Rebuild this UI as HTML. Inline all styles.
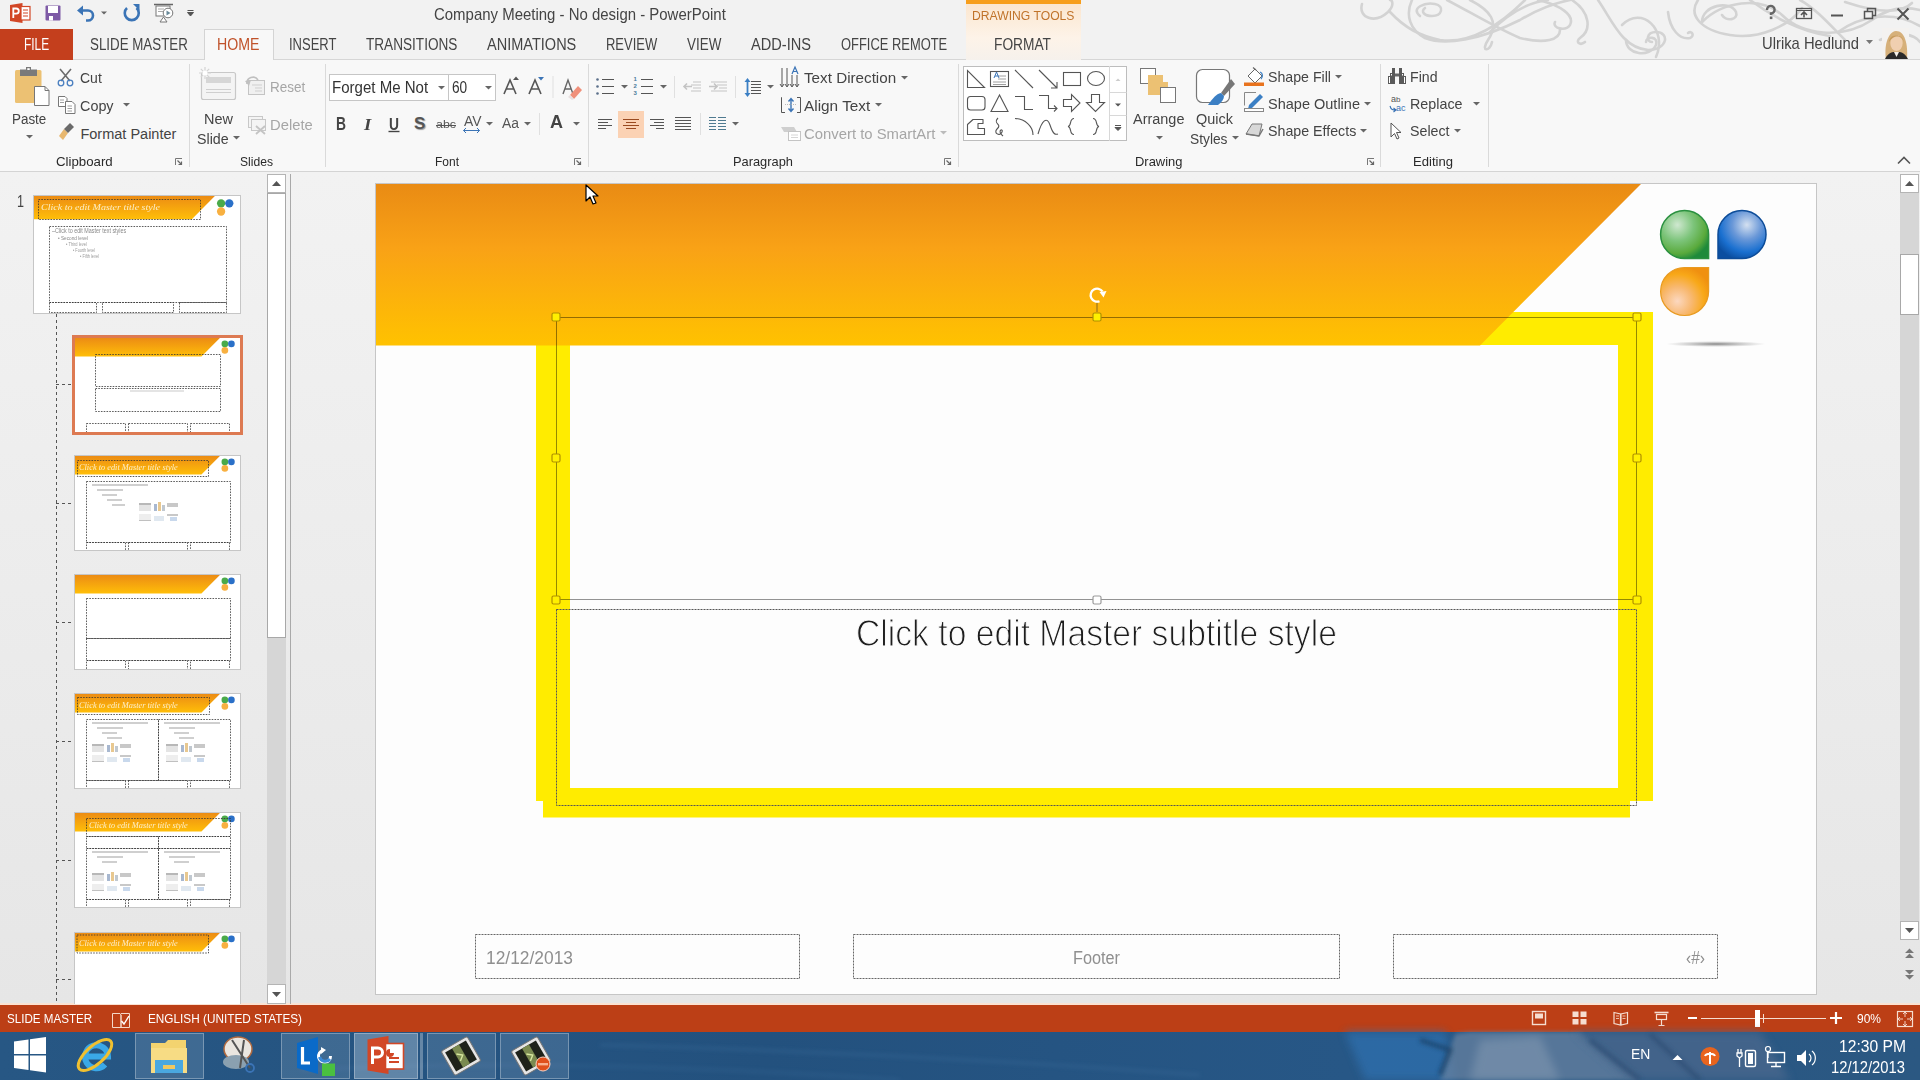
<!DOCTYPE html>
<html><head><meta charset="utf-8"><style>
html,body{margin:0;padding:0;width:1920px;height:1080px;overflow:hidden;background:#f1f1f1;position:relative;font-family:"Liberation Sans",sans-serif}
.t{position:absolute;white-space:nowrap;line-height:1;transform-origin:0 0;-webkit-font-smoothing:antialiased}
svg{overflow:visible}
</style></head><body>
<div style="position:absolute;left:0px;top:0px;width:1920px;height:60px;background:#f2f2f2"></div>
<div style="position:absolute;left:0px;top:59px;width:1920px;height:1px;background:#d6d6d6"></div>
<div style="position:absolute;left:0px;top:60px;width:1920px;height:111px;background:#f8f8f8"></div>
<div style="position:absolute;left:0px;top:171px;width:1920px;height:1px;background:#d4d4d4"></div>
<div style="position:absolute;left:0px;top:172px;width:1920px;height:832px;background:linear-gradient(#f2f2f2,#e6e6e6)"></div>
<div style="position:absolute;left:0px;top:1003px;width:1920px;height:2px;background:#fbe2d2"></div>
<div style="position:absolute;left:0px;top:1005px;width:1920px;height:27px;background:#bc3f16"></div>
<div style="position:absolute;left:0px;top:1032px;width:1920px;height:48px;background:linear-gradient(90deg,#275784 0%,#23517e 40%,#275786 70%,#2b5882 100%)"></div>
<div style="position:absolute;left:376px;top:184px;width:1440px;height:810px;background:#fdfdfd;box-shadow:0 0 0 1px #c6c6c6"></div>
<svg style="position:absolute;left:0px;top:0px;" width="1920" height="1080" viewBox="0 0 1920 1080">
<defs>
<linearGradient id="og" x1="0" y1="0" x2="0" y2="1">
<stop offset="0" stop-color="#e98b14"/><stop offset="0.4" stop-color="#f9a216"/><stop offset="1" stop-color="#ffc200"/>
</linearGradient>
<radialGradient id="gG" cx="0.35" cy="0.3" r="0.75">
<stop offset="0" stop-color="#cfe8d0"/><stop offset="0.45" stop-color="#7cc47a"/><stop offset="0.8" stop-color="#5aaa3c"/><stop offset="1" stop-color="#1e8a3a"/>
</radialGradient>
<radialGradient id="gB" cx="0.6" cy="0.3" r="0.75">
<stop offset="0" stop-color="#d4e0f0"/><stop offset="0.4" stop-color="#6a98d8"/><stop offset="0.75" stop-color="#1a70d0"/><stop offset="1" stop-color="#0b4ea0"/>
</radialGradient>
<radialGradient id="gO" cx="0.35" cy="0.7" r="0.75">
<stop offset="0" stop-color="#fcd8c0"/><stop offset="0.4" stop-color="#f8b870"/><stop offset="0.75" stop-color="#f8a818"/><stop offset="1" stop-color="#f09010"/>
</radialGradient>
<radialGradient id="sh" cx="0.5" cy="0.5" r="0.5">
<stop offset="0" stop-color="#7a7a7a" stop-opacity="0.9"/><stop offset="1" stop-color="#9a9a9a" stop-opacity="0"/>
</radialGradient>
</defs>
<!-- yellow frame -->
<path d="M536 312H1653V801H536Z M570 345V788H1618V345Z" fill="#ffec00" fill-rule="evenodd"/>
<rect x="543" y="788" width="1087" height="29.5" fill="#ffec00"/>
<!-- orange band -->
<path d="M376 184H1641L1480 345.5H376Z" fill="url(#og)"/>
<!-- logo -->
<path d="M1708.6 258.5H1684.6A24 24 0 0 1 1660.6 234.5A24 24 0 0 1 1684.6 210.5A24 24 0 0 1 1708.6 234.5Z" fill="url(#gG)" stroke="#2a9040" stroke-width="1.5"/>
<path d="M1718 258.5V234.5A24 24 0 0 1 1742 210.5A24 24 0 0 1 1766 234.5A24 24 0 0 1 1742 258.5Z" fill="url(#gB)" stroke="#0d4c98" stroke-width="1.5"/>
<path d="M1708.6 267.5V291.5A24 24 0 0 1 1684.6 315.5A24 24 0 0 1 1660.6 291.5A24 24 0 0 1 1684.6 267.5Z" fill="url(#gO)" stroke="#e89a20" stroke-width="1.2"/>
<ellipse cx="1716" cy="344" rx="50" ry="3" fill="url(#sh)"/>
<!-- selection -->
<rect x="556.5" y="317.5" width="1080" height="282" fill="none" stroke="#000" stroke-width="1" opacity="0.42"/>
<line x1="1097" y1="303" x2="1097" y2="312" stroke="#8a6a20" stroke-width="1"/>
<rect x="556.5" y="609.5" width="1080" height="196" fill="none" stroke="#555" stroke-width="1" stroke-dasharray="2 1"/>
<!-- footers -->
<rect x="475.5" y="934.5" width="324" height="44" fill="none" stroke="#666" stroke-width="1" stroke-dasharray="2 1"/>
<rect x="853.5" y="934.5" width="486" height="44" fill="none" stroke="#666" stroke-width="1" stroke-dasharray="2 1"/>
<rect x="1393.5" y="934.5" width="324" height="44" fill="none" stroke="#666" stroke-width="1" stroke-dasharray="2 1"/>
<rect x="552.0" y="313.0" width="8" height="8" rx="1.5" fill="#fff000" stroke="#b09000" stroke-width="1.2"/><rect x="1093.0" y="313.0" width="8" height="8" rx="1.5" fill="#fff000" stroke="#b09000" stroke-width="1.2"/><rect x="1633.0" y="313.0" width="8" height="8" rx="1.5" fill="#fff000" stroke="#b09000" stroke-width="1.2"/><rect x="552.0" y="454.0" width="8" height="8" rx="1.5" fill="#fff000" stroke="#b09000" stroke-width="1.2"/><rect x="1633.0" y="454.0" width="8" height="8" rx="1.5" fill="#fff000" stroke="#b09000" stroke-width="1.2"/><rect x="552.0" y="596.0" width="8" height="8" rx="1.5" fill="#fff000" stroke="#b09000" stroke-width="1.2"/><rect x="1093.0" y="596.0" width="8" height="8" rx="1.5" fill="#ffffff" stroke="#9a9a9a" stroke-width="1.2"/><rect x="1633.0" y="596.0" width="8" height="8" rx="1.5" fill="#fff000" stroke="#b09000" stroke-width="1.2"/><path d="M1099.5 301.2A6.5 6.5 0 1 1 1102.5 291.5" fill="none" stroke="#fff" stroke-width="2.3"/><path d="M1099.5 292L1106.5 291L1103.5 297.5Z" fill="#fff"/></svg>
<div class="t" style="left:856.00px;top:612px;font-size:37.79px;line-height:42px;color:#1e1e1e;font-weight:normal;transform:scaleX(0.8911);-webkit-text-stroke:1.1px #fdfdfd">Click to edit Master subtitle style</div>
<div class="t" style="left:486.00px;top:947px;font-size:18.90px;line-height:21px;color:#8f8f8f;font-weight:normal;transform:scaleX(0.9199);">12/12/2013</div>
<div class="t" style="left:1073.00px;top:947px;font-size:18.90px;line-height:21px;color:#8f8f8f;font-weight:normal;transform:scaleX(0.8607);">Footer</div>
<div class="t" style="left:1686.00px;top:947px;font-size:18.90px;line-height:21px;color:#8f8f8f;font-weight:normal;transform:scaleX(0.8229);">‹#›</div>
<svg style="position:absolute;left:585px;top:184px;" width="14" height="22" viewBox="0 0 14 22"><path d="M1 1V17L5 13L8 20L11 19L8 12H13Z" fill="#fff" stroke="#000" stroke-width="1.2" stroke-linejoin="round"/></svg>
<div style="position:absolute;left:267px;top:174px;width:19px;height:830px;background:#d6d6d6"></div>
<div style="position:absolute;left:267px;top:174px;width:19px;height:19px;background:#fff;box-sizing:border-box;border:1px solid #b4b4b4"></div>
<div style="position:absolute;left:267px;top:193px;width:19px;height:445px;background:#fff;box-sizing:border-box;border:1px solid #a8a8a8"></div>
<div style="position:absolute;left:267px;top:984px;width:19px;height:20px;background:#fff;box-sizing:border-box;border:1px solid #b4b4b4"></div>
<svg style="position:absolute;left:267px;top:174px;" width="19" height="19" viewBox="0 0 19 19"><path d="M5 12H14L9.5 7Z" fill="#555"/></svg>
<svg style="position:absolute;left:267px;top:984px;" width="19" height="20" viewBox="0 0 19 20"><path d="M5 8H14L9.5 13Z" fill="#555"/></svg>
<div style="position:absolute;left:290px;top:174px;width:1px;height:830px;background:#a9a9a9"></div>
<div class="t" style="left:16.50px;top:192px;font-size:16.72px;line-height:19px;color:#444;font-weight:normal;transform:scaleX(0.7532);">1</div>
<svg style="position:absolute;left:0px;top:0px;" width="300" height="1004" viewBox="0 0 300 1004"><line x1="56.5" y1="314" x2="56.5" y2="1004" stroke="#555" stroke-width="1" stroke-dasharray="3 3"/><line x1="56" y1="384.5" x2="73" y2="384.5" stroke="#555" stroke-width="1" stroke-dasharray="3 3"/><line x1="56" y1="503.5" x2="73" y2="503.5" stroke="#555" stroke-width="1" stroke-dasharray="3 3"/><line x1="56" y1="622.5" x2="73" y2="622.5" stroke="#555" stroke-width="1" stroke-dasharray="3 3"/><line x1="56" y1="741.5" x2="73" y2="741.5" stroke="#555" stroke-width="1" stroke-dasharray="3 3"/><line x1="56" y1="860.5" x2="73" y2="860.5" stroke="#555" stroke-width="1" stroke-dasharray="3 3"/><line x1="56" y1="979.5" x2="73" y2="979.5" stroke="#555" stroke-width="1" stroke-dasharray="3 3"/></svg>
<svg style="position:absolute;left:34px;top:196px;overflow:hidden;box-shadow:0 0 0 1px #c6c6c6" width="206" height="117" viewBox="0 0 206 117"><defs><linearGradient id="mog" x1="0" y1="0" x2="0" y2="1"><stop offset="0" stop-color="#ec8c14"/><stop offset="1" stop-color="#ffbe08"/></linearGradient></defs><rect x="0" y="0" width="206.00" height="117.00" fill="#fff"/><path d="M0 0H180.86L157.86 23.14H0Z" fill="url(#mog)"/><circle cx="187.09" cy="7.36" r="4.14" fill="#4aaa4a"/><circle cx="195.29" cy="7.36" r="4.14" fill="#2a70c8"/><circle cx="187.09" cy="15.50" r="4.14" fill="#f8b040"/><rect x="4.50" y="3.50" width="162.00" height="20.00" fill="none" stroke="#333" stroke-width="0.8" stroke-dasharray="1.6 1.2"/><rect x="15.50" y="30.50" width="177.00" height="76.00" fill="none" stroke="#333" stroke-width="0.8" stroke-dasharray="1.6 1.2"/><rect x="15.50" y="106.50" width="47.00" height="10.00" fill="none" stroke="#333" stroke-width="0.8" stroke-dasharray="1.6 1.2"/><rect x="68.50" y="106.50" width="71.00" height="10.00" fill="none" stroke="#333" stroke-width="0.8" stroke-dasharray="1.6 1.2"/><rect x="145.50" y="106.50" width="47.00" height="10.00" fill="none" stroke="#333" stroke-width="0.8" stroke-dasharray="1.6 1.2"/></svg>
<div class="t" style="left:41.00px;top:202px;font-size:8.72px;line-height:10px;color:rgba(255,250,235,0.85);font-weight:normal;transform:scaleX(1.1507);font-style:italic;font-family:'Liberation Serif'">Click to edit Master title style</div>
<div class="t" style="left:51.60px;top:226px;font-size:7.27px;line-height:9px;color:#8a8a8a;font-weight:normal;transform:scaleX(0.7408);">–Click to edit Master text styles</div>
<div class="t" style="left:58.00px;top:234px;font-size:6.10px;line-height:7px;color:#8a8a8a;font-weight:normal;transform:scaleX(0.7734);">• Second level</div>
<div class="t" style="left:66.00px;top:242px;font-size:4.65px;line-height:5px;color:#9a9a9a;font-weight:normal;transform:scaleX(0.8644);">• Third level</div>
<div class="t" style="left:73.00px;top:248px;font-size:4.65px;line-height:5px;color:#9a9a9a;font-weight:normal;transform:scaleX(0.8081);">• Fourth level</div>
<div class="t" style="left:80.00px;top:254px;font-size:4.65px;line-height:5px;color:#9a9a9a;font-weight:normal;transform:scaleX(0.8325);">• Fifth level</div>
<div style="position:absolute;left:72px;top:335px;width:171px;height:100px;box-sizing:border-box;border:3px solid #dd7a52"></div>
<svg style="position:absolute;left:75px;top:338px;overflow:hidden;box-shadow:0 0 0 1px #dd7a52" width="165" height="94" viewBox="0 0 165 94"><defs><linearGradient id="mog" x1="0" y1="0" x2="0" y2="1"><stop offset="0" stop-color="#ec8c14"/><stop offset="1" stop-color="#ffbe08"/></linearGradient></defs><rect x="0" y="0" width="165.00" height="94.00" fill="#fff"/><path d="M0 0H144.86L126.44 18.54H0Z" fill="url(#mog)"/><circle cx="149.85" cy="5.89" r="3.32" fill="#4aaa4a"/><circle cx="156.42" cy="5.89" r="3.32" fill="#2a70c8"/><circle cx="149.85" cy="12.42" r="3.32" fill="#f8b040"/><rect x="20.50" y="16.50" width="125.00" height="32.00" fill="none" stroke="#333" stroke-width="0.8" stroke-dasharray="1.6 1.2"/><rect x="20.50" y="50.50" width="125.00" height="23.00" fill="none" stroke="#333" stroke-width="0.8" stroke-dasharray="1.6 1.2"/><rect x="11.50" y="85.50" width="39.00" height="9.00" fill="none" stroke="#333" stroke-width="0.8" stroke-dasharray="1.6 1.2"/><rect x="53.50" y="85.50" width="59.00" height="9.00" fill="none" stroke="#333" stroke-width="0.8" stroke-dasharray="1.6 1.2"/><rect x="115.50" y="85.50" width="39.00" height="9.00" fill="none" stroke="#333" stroke-width="0.8" stroke-dasharray="1.6 1.2"/></svg>
<div style="position:absolute;left:130px;top:390px;width:54px;height:2px;background:#e4e4e4"></div>
<svg style="position:absolute;left:75px;top:456px;overflow:hidden;box-shadow:0 0 0 1px #c6c6c6" width="165" height="94" viewBox="0 0 165 94"><defs><linearGradient id="mog" x1="0" y1="0" x2="0" y2="1"><stop offset="0" stop-color="#ec8c14"/><stop offset="1" stop-color="#ffbe08"/></linearGradient></defs><rect x="0" y="0" width="165.00" height="94.00" fill="#fff"/><path d="M0 0H144.86L126.44 18.54H0Z" fill="url(#mog)"/><circle cx="149.85" cy="5.89" r="3.32" fill="#4aaa4a"/><circle cx="156.42" cy="5.89" r="3.32" fill="#2a70c8"/><circle cx="149.85" cy="12.42" r="3.32" fill="#f8b040"/><rect x="2.50" y="4.50" width="131.00" height="16.00" fill="none" stroke="#333" stroke-width="0.8" stroke-dasharray="1.6 1.2"/><rect x="11.50" y="25.50" width="144.00" height="61.00" fill="none" stroke="#333" stroke-width="0.8" stroke-dasharray="1.6 1.2"/><rect x="11.50" y="86.50" width="39.00" height="9.00" fill="none" stroke="#333" stroke-width="0.8" stroke-dasharray="1.6 1.2"/><rect x="53.50" y="86.50" width="59.00" height="9.00" fill="none" stroke="#333" stroke-width="0.8" stroke-dasharray="1.6 1.2"/><rect x="115.50" y="86.50" width="39.00" height="9.00" fill="none" stroke="#333" stroke-width="0.8" stroke-dasharray="1.6 1.2"/></svg>
<svg style="position:absolute;left:75px;top:575px;overflow:hidden;box-shadow:0 0 0 1px #c6c6c6" width="165" height="94" viewBox="0 0 165 94"><defs><linearGradient id="mog" x1="0" y1="0" x2="0" y2="1"><stop offset="0" stop-color="#ec8c14"/><stop offset="1" stop-color="#ffbe08"/></linearGradient></defs><rect x="0" y="0" width="165.00" height="94.00" fill="#fff"/><path d="M0 0H144.86L126.44 18.54H0Z" fill="url(#mog)"/><circle cx="149.85" cy="5.89" r="3.32" fill="#4aaa4a"/><circle cx="156.42" cy="5.89" r="3.32" fill="#2a70c8"/><circle cx="149.85" cy="12.42" r="3.32" fill="#f8b040"/><rect x="11.50" y="23.50" width="144.00" height="40.00" fill="none" stroke="#333" stroke-width="0.8" stroke-dasharray="1.6 1.2"/><rect x="11.50" y="63.50" width="144.00" height="22.00" fill="none" stroke="#333" stroke-width="0.8" stroke-dasharray="1.6 1.2"/><rect x="11.50" y="85.50" width="39.00" height="10.00" fill="none" stroke="#333" stroke-width="0.8" stroke-dasharray="1.6 1.2"/><rect x="53.50" y="85.50" width="59.00" height="10.00" fill="none" stroke="#333" stroke-width="0.8" stroke-dasharray="1.6 1.2"/><rect x="115.50" y="85.50" width="39.00" height="10.00" fill="none" stroke="#333" stroke-width="0.8" stroke-dasharray="1.6 1.2"/></svg>
<svg style="position:absolute;left:75px;top:694px;overflow:hidden;box-shadow:0 0 0 1px #c6c6c6" width="165" height="94" viewBox="0 0 165 94"><defs><linearGradient id="mog" x1="0" y1="0" x2="0" y2="1"><stop offset="0" stop-color="#ec8c14"/><stop offset="1" stop-color="#ffbe08"/></linearGradient></defs><rect x="0" y="0" width="165.00" height="94.00" fill="#fff"/><path d="M0 0H144.86L126.44 18.54H0Z" fill="url(#mog)"/><circle cx="149.85" cy="5.89" r="3.32" fill="#4aaa4a"/><circle cx="156.42" cy="5.89" r="3.32" fill="#2a70c8"/><circle cx="149.85" cy="12.42" r="3.32" fill="#f8b040"/><rect x="2.50" y="3.50" width="132.00" height="17.00" fill="none" stroke="#333" stroke-width="0.8" stroke-dasharray="1.6 1.2"/><rect x="11.50" y="25.50" width="72.00" height="61.00" fill="none" stroke="#333" stroke-width="0.8" stroke-dasharray="1.6 1.2"/><rect x="83.50" y="25.50" width="72.00" height="61.00" fill="none" stroke="#333" stroke-width="0.8" stroke-dasharray="1.6 1.2"/><rect x="11.50" y="86.50" width="39.00" height="9.00" fill="none" stroke="#333" stroke-width="0.8" stroke-dasharray="1.6 1.2"/><rect x="53.50" y="86.50" width="59.00" height="9.00" fill="none" stroke="#333" stroke-width="0.8" stroke-dasharray="1.6 1.2"/><rect x="115.50" y="86.50" width="39.00" height="9.00" fill="none" stroke="#333" stroke-width="0.8" stroke-dasharray="1.6 1.2"/></svg>
<svg style="position:absolute;left:75px;top:813px;overflow:hidden;box-shadow:0 0 0 1px #c6c6c6" width="165" height="94" viewBox="0 0 165 94"><defs><linearGradient id="mog" x1="0" y1="0" x2="0" y2="1"><stop offset="0" stop-color="#ec8c14"/><stop offset="1" stop-color="#ffbe08"/></linearGradient></defs><rect x="0" y="0" width="165.00" height="94.00" fill="#fff"/><path d="M0 0H144.86L126.44 18.54H0Z" fill="url(#mog)"/><circle cx="149.85" cy="5.89" r="3.32" fill="#4aaa4a"/><circle cx="156.42" cy="5.89" r="3.32" fill="#2a70c8"/><circle cx="149.85" cy="12.42" r="3.32" fill="#f8b040"/><rect x="11.50" y="5.50" width="144.00" height="18.00" fill="none" stroke="#333" stroke-width="0.8" stroke-dasharray="1.6 1.2"/><rect x="11.50" y="23.50" width="72.00" height="12.00" fill="none" stroke="#333" stroke-width="0.8" stroke-dasharray="1.6 1.2"/><rect x="83.50" y="23.50" width="72.00" height="12.00" fill="none" stroke="#333" stroke-width="0.8" stroke-dasharray="1.6 1.2"/><rect x="11.50" y="35.50" width="72.00" height="51.00" fill="none" stroke="#333" stroke-width="0.8" stroke-dasharray="1.6 1.2"/><rect x="83.50" y="35.50" width="72.00" height="51.00" fill="none" stroke="#333" stroke-width="0.8" stroke-dasharray="1.6 1.2"/><rect x="11.50" y="86.50" width="39.00" height="9.00" fill="none" stroke="#333" stroke-width="0.8" stroke-dasharray="1.6 1.2"/><rect x="53.50" y="86.50" width="59.00" height="9.00" fill="none" stroke="#333" stroke-width="0.8" stroke-dasharray="1.6 1.2"/><rect x="115.50" y="86.50" width="39.00" height="9.00" fill="none" stroke="#333" stroke-width="0.8" stroke-dasharray="1.6 1.2"/></svg>
<div style="position:absolute;left:73px;top:931px;width:169px;height:73px;overflow:hidden">
<svg style="position:absolute;left:2px;top:2px;overflow:hidden;box-shadow:0 0 0 1px #c6c6c6" width="165" height="94" viewBox="0 0 165 94"><defs><linearGradient id="mog" x1="0" y1="0" x2="0" y2="1"><stop offset="0" stop-color="#ec8c14"/><stop offset="1" stop-color="#ffbe08"/></linearGradient></defs><rect x="0" y="0" width="165.00" height="94.00" fill="#fff"/><path d="M0 0H144.86L126.44 18.54H0Z" fill="url(#mog)"/><circle cx="149.85" cy="5.89" r="3.32" fill="#4aaa4a"/><circle cx="156.42" cy="5.89" r="3.32" fill="#2a70c8"/><circle cx="149.85" cy="12.42" r="3.32" fill="#f8b040"/><rect x="2.00" y="2.00" width="131.50" height="18.00" fill="none" stroke="#333" stroke-width="0.8" stroke-dasharray="1.6 1.2"/></svg>
</div>
<div class="t" style="left:79.00px;top:463px;font-size:7.70px;line-height:9px;color:rgba(255,250,235,0.85);font-weight:normal;transform:scaleX(1.0838);font-style:italic;font-family:'Liberation Serif'">Click to edit Master title style</div>
<div class="t" style="left:79.00px;top:701px;font-size:7.70px;line-height:9px;color:rgba(255,250,235,0.85);font-weight:normal;transform:scaleX(1.0838);font-style:italic;font-family:'Liberation Serif'">Click to edit Master title style</div>
<div class="t" style="left:79.00px;top:939px;font-size:7.70px;line-height:9px;color:rgba(255,250,235,0.85);font-weight:normal;transform:scaleX(1.0838);font-style:italic;font-family:'Liberation Serif'">Click to edit Master title style</div>
<div class="t" style="left:89.00px;top:821px;font-size:7.70px;line-height:9px;color:rgba(255,250,235,0.85);font-weight:normal;transform:scaleX(1.0838);font-style:italic;font-family:'Liberation Serif'">Click to edit Master title style</div>
<div style="position:absolute;left:92px;top:484px;width:56px;height:2px;background:#cfcfcf"></div>
<div style="position:absolute;left:97px;top:489px;width:26px;height:2px;background:#cfcfcf"></div>
<div style="position:absolute;left:102px;top:494px;width:15px;height:2px;background:#cfcfcf"></div>
<div style="position:absolute;left:107px;top:499px;width:15px;height:2px;background:#cfcfcf"></div>
<div style="position:absolute;left:112px;top:504px;width:13px;height:2px;background:#cfcfcf"></div>
<div style="position:absolute;left:92px;top:722px;width:56px;height:2px;background:#cfcfcf"></div>
<div style="position:absolute;left:97px;top:727px;width:26px;height:2px;background:#cfcfcf"></div>
<div style="position:absolute;left:102px;top:732px;width:15px;height:2px;background:#cfcfcf"></div>
<div style="position:absolute;left:107px;top:737px;width:15px;height:2px;background:#cfcfcf"></div>
<div style="position:absolute;left:164px;top:722px;width:56px;height:2px;background:#cfcfcf"></div>
<div style="position:absolute;left:169px;top:727px;width:26px;height:2px;background:#cfcfcf"></div>
<div style="position:absolute;left:174px;top:732px;width:15px;height:2px;background:#cfcfcf"></div>
<div style="position:absolute;left:179px;top:737px;width:15px;height:2px;background:#cfcfcf"></div>
<div style="position:absolute;left:92px;top:851px;width:56px;height:2px;background:#cfcfcf"></div>
<div style="position:absolute;left:97px;top:856px;width:26px;height:2px;background:#cfcfcf"></div>
<div style="position:absolute;left:102px;top:861px;width:15px;height:2px;background:#cfcfcf"></div>
<div style="position:absolute;left:164px;top:851px;width:56px;height:2px;background:#cfcfcf"></div>
<div style="position:absolute;left:169px;top:856px;width:26px;height:2px;background:#cfcfcf"></div>
<div style="position:absolute;left:174px;top:861px;width:15px;height:2px;background:#cfcfcf"></div>
<div style="position:absolute;left:139px;top:503px;width:12px;height:8px;background:#e4e4e4;box-shadow:inset 0 2px #b8b8b8"></div>
<div style="position:absolute;left:154px;top:504px;width:3px;height:7px;background:#a8b8d0"></div>
<div style="position:absolute;left:158px;top:502px;width:3px;height:9px;background:#e8c890"></div>
<div style="position:absolute;left:162px;top:505px;width:3px;height:6px;background:#c0c8d0"></div>
<div style="position:absolute;left:167px;top:503px;width:11px;height:4px;background:#c8c8c8"></div>
<div style="position:absolute;left:139px;top:514px;width:12px;height:7px;background:#eeeeee;box-shadow:inset 0 -1px #c0c0c0"></div>
<div style="position:absolute;left:154px;top:516px;width:10px;height:5px;background:#e0e8f0"></div>
<div style="position:absolute;left:167px;top:514px;width:11px;height:2px;background:#c8c8c8"></div>
<div style="position:absolute;left:170px;top:517px;width:7px;height:4px;background:#c8d8ec"></div>
<div style="position:absolute;left:92px;top:744px;width:12px;height:8px;background:#e4e4e4;box-shadow:inset 0 2px #b8b8b8"></div>
<div style="position:absolute;left:107px;top:745px;width:3px;height:7px;background:#a8b8d0"></div>
<div style="position:absolute;left:111px;top:743px;width:3px;height:9px;background:#e8c890"></div>
<div style="position:absolute;left:115px;top:746px;width:3px;height:6px;background:#c0c8d0"></div>
<div style="position:absolute;left:120px;top:744px;width:11px;height:4px;background:#c8c8c8"></div>
<div style="position:absolute;left:92px;top:755px;width:12px;height:7px;background:#eeeeee;box-shadow:inset 0 -1px #c0c0c0"></div>
<div style="position:absolute;left:107px;top:757px;width:10px;height:5px;background:#e0e8f0"></div>
<div style="position:absolute;left:120px;top:755px;width:11px;height:2px;background:#c8c8c8"></div>
<div style="position:absolute;left:123px;top:758px;width:7px;height:4px;background:#c8d8ec"></div>
<div style="position:absolute;left:166px;top:744px;width:12px;height:8px;background:#e4e4e4;box-shadow:inset 0 2px #b8b8b8"></div>
<div style="position:absolute;left:181px;top:745px;width:3px;height:7px;background:#a8b8d0"></div>
<div style="position:absolute;left:185px;top:743px;width:3px;height:9px;background:#e8c890"></div>
<div style="position:absolute;left:189px;top:746px;width:3px;height:6px;background:#c0c8d0"></div>
<div style="position:absolute;left:194px;top:744px;width:11px;height:4px;background:#c8c8c8"></div>
<div style="position:absolute;left:166px;top:755px;width:12px;height:7px;background:#eeeeee;box-shadow:inset 0 -1px #c0c0c0"></div>
<div style="position:absolute;left:181px;top:757px;width:10px;height:5px;background:#e0e8f0"></div>
<div style="position:absolute;left:194px;top:755px;width:11px;height:2px;background:#c8c8c8"></div>
<div style="position:absolute;left:197px;top:758px;width:7px;height:4px;background:#c8d8ec"></div>
<div style="position:absolute;left:92px;top:873px;width:12px;height:8px;background:#e4e4e4;box-shadow:inset 0 2px #b8b8b8"></div>
<div style="position:absolute;left:107px;top:874px;width:3px;height:7px;background:#a8b8d0"></div>
<div style="position:absolute;left:111px;top:872px;width:3px;height:9px;background:#e8c890"></div>
<div style="position:absolute;left:115px;top:875px;width:3px;height:6px;background:#c0c8d0"></div>
<div style="position:absolute;left:120px;top:873px;width:11px;height:4px;background:#c8c8c8"></div>
<div style="position:absolute;left:92px;top:884px;width:12px;height:7px;background:#eeeeee;box-shadow:inset 0 -1px #c0c0c0"></div>
<div style="position:absolute;left:107px;top:886px;width:10px;height:5px;background:#e0e8f0"></div>
<div style="position:absolute;left:120px;top:884px;width:11px;height:2px;background:#c8c8c8"></div>
<div style="position:absolute;left:123px;top:887px;width:7px;height:4px;background:#c8d8ec"></div>
<div style="position:absolute;left:166px;top:873px;width:12px;height:8px;background:#e4e4e4;box-shadow:inset 0 2px #b8b8b8"></div>
<div style="position:absolute;left:181px;top:874px;width:3px;height:7px;background:#a8b8d0"></div>
<div style="position:absolute;left:185px;top:872px;width:3px;height:9px;background:#e8c890"></div>
<div style="position:absolute;left:189px;top:875px;width:3px;height:6px;background:#c0c8d0"></div>
<div style="position:absolute;left:194px;top:873px;width:11px;height:4px;background:#c8c8c8"></div>
<div style="position:absolute;left:166px;top:884px;width:12px;height:7px;background:#eeeeee;box-shadow:inset 0 -1px #c0c0c0"></div>
<div style="position:absolute;left:181px;top:886px;width:10px;height:5px;background:#e0e8f0"></div>
<div style="position:absolute;left:194px;top:884px;width:11px;height:2px;background:#c8c8c8"></div>
<div style="position:absolute;left:197px;top:887px;width:7px;height:4px;background:#c8d8ec"></div>
<svg style="position:absolute;left:0px;top:0px;overflow:hidden" width="1920" height="59" viewBox="0 0 1920 59"><g fill="none" stroke="#d3d3d3" stroke-width="2.6" stroke-linecap="round"><path d="M1362 4C1358 18 1375 24 1388 12C1395 5 1392 0 1390 0"/><path d="M1390 12C1405 28 1420 36 1440 40C1470 44 1500 25 1525 0"/><path d="M1412 0C1405 15 1410 30 1425 38C1445 46 1480 40 1520 20C1540 8 1560 2 1570 0"/><path d="M1420 16C1410 8 1425 2 1435 4C1445 6 1442 16 1432 16C1425 16 1420 12 1425 8"/><path d="M1447 0C1470 12 1500 30 1520 38C1545 44 1560 40 1560 30"/><path d="M1470 0C1490 10 1500 22 1488 40C1480 52 1490 52 1492 42"/><path d="M1490 32C1510 12 1530 2 1548 0"/><path d="M1538 0C1560 5 1575 15 1570 25C1565 32 1552 28 1555 22"/><path d="M1572 0C1590 12 1592 30 1580 38C1575 42 1580 46 1585 42"/><path d="M1598 0C1612 20 1622 48 1648 50C1668 50 1670 32 1656 32C1646 32 1646 42 1652 42"/><path d="M1622 25C1642 5 1668 30 1656 57"/><path d="M1626 40C1626 55 1650 58 1656 45C1659 36 1646 36 1646 42"/><path d="M1668 12C1670 30 1680 40 1690 38C1695 36 1692 30 1688 33"/><path d="M1698 0C1688 15 1700 30 1730 35C1760 40 1790 25 1802 8"/><path d="M1702 22C1722 2 1760 -5 1782 15C1802 35 1842 40 1872 20C1885 10 1900 5 1920 10"/><path d="M1702 22C1702 5 1730 0 1736 12C1739 20 1726 22 1722 15"/><path d="M1750 0C1770 15 1800 32 1830 36"/><path d="M1800 0C1815 8 1830 25 1845 40"/><path d="M1845 2C1875 12 1900 15 1912 3"/><path d="M1838 32C1860 16 1892 10 1920 26"/><path d="M1880 40C1900 30 1915 35 1920 42"/></g></svg>
<svg style="position:absolute;left:0px;top:0px;" width="200" height="28" viewBox="0 0 200 28">
<path d="M10 5L22.5 3V23L10 21Z" fill="#d24726"/>
<rect x="21" y="6.5" width="9" height="13.5" fill="#fff" stroke="#d24726" stroke-width="1.2"/>
<path d="M13.3 18V8.5H16.2A2.6 2.6 0 0 1 16.2 13.7H13.3" fill="none" stroke="#fff" stroke-width="1.8"/>
<path d="M23 10H28M23 13H28M23 16H28" stroke="#d24726" stroke-width="1"/>
<rect x="45.5" y="5.5" width="15" height="15" rx="1" fill="#7e5ba6"/>
<rect x="48" y="6" width="10" height="7" fill="#fff"/>
<rect x="49" y="16" width="4" height="4.5" fill="#fff"/>
<path d="M79 10.5H88A5 5 0 0 1 88 20.5H86" fill="none" stroke="#3b74b6" stroke-width="2.6"/>
<path d="M77 10.5L83 5.5V15.5Z" fill="#3b74b6"/>
<path d="M101 11.5H107L104 14.5Z" fill="#666"/>
<path d="M136.5 8A7 7 0 1 1 127 8" fill="none" stroke="#3b74b6" stroke-width="2.6"/>
<path d="M133 4H139.5V10.5Z" fill="#3b74b6"/>
<path d="M154 4.5H173" stroke="#666" stroke-width="1.5"/>
<rect x="156" y="6" width="14" height="10" fill="#fff" stroke="#777" stroke-width="1"/>
<path d="M158 9H164M158 11.5H163" stroke="#aaa" stroke-width="1"/>
<circle cx="168" cy="13" r="4.8" fill="#fff" stroke="#777" stroke-width="1"/>
<path d="M166.5 10.5V15.5L170.5 13Z" fill="#6a8a9a"/>
<path d="M160 22L163.5 17L167 22Z" fill="#fff" stroke="#777" stroke-width="1"/>
<path d="M187.5 10.5H193.5M187.5 12.5H193.5L190.5 16Z" stroke="#555" stroke-width="1" fill="#555"/>
</svg>
<div class="t" style="left:433.50px;top:6px;font-size:15.70px;line-height:17px;color:#444;font-weight:normal;transform:scaleX(0.9535);">Company Meeting - No design - PowerPoint</div>
<div style="position:absolute;left:966px;top:0px;width:115px;height:4px;background:#f79e1b"></div>
<div style="position:absolute;left:966px;top:4px;width:115px;height:56px;background:linear-gradient(#fbe6cf,#fdf3e8 60%,#f6f1ec)"></div>
<div class="t" style="left:972.00px;top:8px;font-size:13.08px;line-height:15px;color:#c0732a;font-weight:normal;transform:scaleX(0.9298);">DRAWING TOOLS</div>
<svg style="position:absolute;left:0px;top:0px;" width="1920" height="30" viewBox="0 0 1920 30">
<path d="M1767 10A3.8 3.8 0 1 1 1771 13.5V15" fill="none" stroke="#666" stroke-width="2.4"/>
<rect x="1769.8" y="16.5" width="2.6" height="2.6" fill="#666"/>
<rect x="1796.5" y="8.5" width="15" height="10" fill="none" stroke="#555" stroke-width="1.3"/>
<path d="M1796.5 10.5H1811.5" stroke="#555" stroke-width="1"/>
<path d="M1804 17.5V12.5M1801 15L1804 12L1807 15" fill="none" stroke="#555" stroke-width="1.6"/>
<path d="M1831 15.5H1843" stroke="#555" stroke-width="2"/>
<rect x="1864.5" y="11.5" width="8" height="7" fill="none" stroke="#555" stroke-width="1.5"/>
<path d="M1867.5 11.5V8.5H1875.5V15.5H1872.5" fill="none" stroke="#555" stroke-width="1.5"/>
<path d="M1897.5 8.5L1908.5 19.5M1908.5 8.5L1897.5 19.5" stroke="#555" stroke-width="2"/>
</svg>
<div class="t" style="left:1762.00px;top:35px;font-size:15.99px;line-height:17px;color:#444;font-weight:normal;transform:scaleX(0.9250);">Ulrika Hedlund</div>
<svg style="position:absolute;left:1866px;top:40px;" width="8" height="5" viewBox="0 0 8 5"><path d="M0 0H7L3.5 4Z" fill="#777"/></svg>
<svg style="position:absolute;left:1882px;top:28px;" width="27" height="31" viewBox="0 0 27 31">
<rect x="0" y="0" width="27" height="31" fill="#f4f2f0"/>
<path d="M4 31C2 20 5 4 14 3C23 3 26 16 25 31Z" fill="#d6b07a"/>
<ellipse cx="14.5" cy="15" rx="6.2" ry="8" fill="#f0cfb0"/>
<path d="M7 14C7 6 20 4 22 14C20 9 17 8 14 8.5C11 9.5 9 11 7 14Z" fill="#c89c5c"/>
<path d="M3 31C6 25 10 23.5 14.5 24C19 23.5 23 25 26 31Z" fill="#2a2a2a"/>
<path d="M12 24L14.5 29L17 24Z" fill="#f4f0ea"/>
</svg>
<div style="position:absolute;left:0px;top:29px;width:73px;height:31px;background:#c43f1d"></div>
<div class="t" style="left:23.50px;top:35px;font-size:16.72px;line-height:19px;color:#fff;font-weight:normal;transform:scaleX(0.7138);">FILE</div>
<div class="t" style="left:90.20px;top:35px;font-size:16.86px;line-height:19px;color:#444;font-weight:normal;transform:scaleX(0.7908);">SLIDE MASTER</div>
<div style="position:absolute;left:204px;top:29px;width:70px;height:31px;background:#f8f8f8;box-sizing:border-box;border:1px solid #d4d4d4;border-bottom:none"></div>
<div class="t" style="left:217.00px;top:35px;font-size:16.86px;line-height:19px;color:#c0522a;font-weight:normal;transform:scaleX(0.8402);">HOME</div>
<div class="t" style="left:289.30px;top:35px;font-size:16.86px;line-height:19px;color:#444;font-weight:normal;transform:scaleX(0.7704);">INSERT</div>
<div class="t" style="left:366.30px;top:35px;font-size:16.86px;line-height:19px;color:#444;font-weight:normal;transform:scaleX(0.8063);">TRANSITIONS</div>
<div class="t" style="left:487.00px;top:35px;font-size:16.86px;line-height:19px;color:#444;font-weight:normal;transform:scaleX(0.8615);">ANIMATIONS</div>
<div class="t" style="left:606.30px;top:35px;font-size:16.86px;line-height:19px;color:#444;font-weight:normal;transform:scaleX(0.7698);">REVIEW</div>
<div class="t" style="left:687.00px;top:35px;font-size:16.86px;line-height:19px;color:#444;font-weight:normal;transform:scaleX(0.7959);">VIEW</div>
<div class="t" style="left:751.30px;top:35px;font-size:16.86px;line-height:19px;color:#444;font-weight:normal;transform:scaleX(0.8656);">ADD-INS</div>
<div class="t" style="left:841.30px;top:35px;font-size:16.86px;line-height:19px;color:#444;font-weight:normal;transform:scaleX(0.7661);">OFFICE REMOTE</div>
<div class="t" style="left:994.00px;top:35px;font-size:16.86px;line-height:19px;color:#444;font-weight:normal;transform:scaleX(0.8152);">FORMAT</div>
<div style="position:absolute;left:188.5px;top:64px;width:1px;height:103px;background:#dadada"></div>
<div style="position:absolute;left:324.5px;top:64px;width:1px;height:103px;background:#dadada"></div>
<div style="position:absolute;left:587.5px;top:64px;width:1px;height:103px;background:#dadada"></div>
<div style="position:absolute;left:957.5px;top:64px;width:1px;height:103px;background:#dadada"></div>
<div style="position:absolute;left:1379.5px;top:64px;width:1px;height:103px;background:#dadada"></div>
<div style="position:absolute;left:1488px;top:64px;width:1px;height:103px;background:#dadada"></div>
<div class="t" style="left:55.60px;top:154px;font-size:13.37px;line-height:15px;color:#2a2a2a;font-weight:normal;transform:scaleX(0.9924);">Clipboard</div>
<div class="t" style="left:239.50px;top:154px;font-size:13.37px;line-height:15px;color:#2a2a2a;font-weight:normal;transform:scaleX(0.9060);">Slides</div>
<div class="t" style="left:434.50px;top:154px;font-size:13.37px;line-height:15px;color:#2a2a2a;font-weight:normal;transform:scaleX(0.8969);">Font</div>
<div class="t" style="left:732.50px;top:154px;font-size:13.37px;line-height:15px;color:#2a2a2a;font-weight:normal;transform:scaleX(0.9608);">Paragraph</div>
<div class="t" style="left:1135.00px;top:154px;font-size:13.37px;line-height:15px;color:#2a2a2a;font-weight:normal;transform:scaleX(0.9684);">Drawing</div>
<div class="t" style="left:1413.00px;top:154px;font-size:13.37px;line-height:15px;color:#2a2a2a;font-weight:normal;transform:scaleX(0.9782);">Editing</div>
<svg style="position:absolute;left:175px;top:158px;" width="8" height="8" viewBox="0 0 8 8"><path d="M0.5 7V0.5H7" fill="none" stroke="#777" stroke-width="1"/><path d="M2.5 2.5L6.5 6.5M3.5 6.5H6.5V3.5" fill="none" stroke="#666" stroke-width="1.2"/></svg>
<svg style="position:absolute;left:574px;top:158px;" width="8" height="8" viewBox="0 0 8 8"><path d="M0.5 7V0.5H7" fill="none" stroke="#777" stroke-width="1"/><path d="M2.5 2.5L6.5 6.5M3.5 6.5H6.5V3.5" fill="none" stroke="#666" stroke-width="1.2"/></svg>
<svg style="position:absolute;left:944px;top:158px;" width="8" height="8" viewBox="0 0 8 8"><path d="M0.5 7V0.5H7" fill="none" stroke="#777" stroke-width="1"/><path d="M2.5 2.5L6.5 6.5M3.5 6.5H6.5V3.5" fill="none" stroke="#666" stroke-width="1.2"/></svg>
<svg style="position:absolute;left:1367px;top:158px;" width="8" height="8" viewBox="0 0 8 8"><path d="M0.5 7V0.5H7" fill="none" stroke="#777" stroke-width="1"/><path d="M2.5 2.5L6.5 6.5M3.5 6.5H6.5V3.5" fill="none" stroke="#666" stroke-width="1.2"/></svg>
<svg style="position:absolute;left:0px;top:0px;" width="200" height="172" viewBox="0 0 200 172">
<rect x="15" y="70" width="26.5" height="33" rx="1.5" fill="#ecc173"/>
<path d="M20 69.5H37V76H20Z" fill="#7a7a7a"/>
<rect x="26" y="67" width="5" height="4" fill="#7a7a7a"/>
<rect x="27.3" y="68.2" width="2.4" height="1.8" fill="#fff"/>
<path d="M34.5 86.5H45L49 90.5V105.5H34.5Z" fill="#fff" stroke="#777" stroke-width="1"/>
<path d="M45 86.5V90.5H49" fill="none" stroke="#777" stroke-width="1"/>
<path d="M60 69L70 81M71 69L61 81" stroke="#6c6c6c" stroke-width="1.6"/>
<circle cx="61" cy="83" r="2.8" fill="none" stroke="#4a7fc0" stroke-width="1.3"/>
<circle cx="70" cy="83" r="2.8" fill="none" stroke="#4a7fc0" stroke-width="1.3"/>
<path d="M58.5 96.5H65L67 98.5V106.5H58.5Z" fill="#fff" stroke="#777" stroke-width="1"/>
<path d="M65.5 101.5H72L75 104.5V113.5H65.5Z" fill="#fff" stroke="#777" stroke-width="1"/>
<path d="M60 100H64M60 102.5H64M67.5 106H72M67.5 108.5H72M67.5 111H72" stroke="#888" stroke-width="0.8"/>
<path d="M59 136L64 129L68 133L63 140Z" fill="#e8b870"/>
<path d="M64 129L70 123L74 127L68 133Z" fill="#6a6a6a"/>
</svg>
<div class="t" style="left:11.50px;top:110px;font-size:15.26px;line-height:17px;color:#444;font-weight:normal;transform:scaleX(0.8789);">Paste</div>
<svg style="position:absolute;left:25.5px;top:135px;" width="7" height="4" viewBox="0 0 7 4"><path d="M0 0H7L3.5 3.5Z" fill="#666"/></svg>
<div class="t" style="left:80.40px;top:70px;font-size:14.53px;line-height:16px;color:#444;font-weight:normal;transform:scaleX(0.9639);">Cut</div>
<div class="t" style="left:80.40px;top:98px;font-size:14.53px;line-height:16px;color:#444;font-weight:normal;transform:scaleX(0.9904);">Copy</div>
<svg style="position:absolute;left:123.2px;top:103px;" width="7" height="4" viewBox="0 0 7 4"><path d="M0 0H7L3.5 3.5Z" fill="#666"/></svg>
<div class="t" style="left:80.40px;top:126px;font-size:14.53px;line-height:16px;color:#444;font-weight:normal;">Format Painter</div>
<svg style="position:absolute;left:0px;top:0px;" width="330" height="172" viewBox="0 0 330 172">
<rect x="201.5" y="72.5" width="34" height="27" rx="2" fill="#f4f4f4" stroke="#c8c8c8" stroke-width="1.2"/>
<rect x="206" y="77" width="25" height="6" fill="#d6d6d6"/>
<path d="M206 89.5H231M206 92.5H231" stroke="#cfcfcf" stroke-width="1"/>
<g stroke="#d4d4d4" stroke-width="1.2"><path d="M205 67V79M199 73H211M200.8 68.8L209.2 77.2M209.2 68.8L200.8 77.2"/></g>
<circle cx="205" cy="73" r="2.5" fill="#fff"/>
<rect x="248.5" y="80.5" width="16" height="14" fill="#f0f0f0" stroke="#c4c4c4" stroke-width="1"/>
<path d="M252 85H262M255 88H262M255 91H262" stroke="#cfcfcf" stroke-width="1"/>
<path d="M247 84A6 6 0 0 1 258 80" fill="none" stroke="#c0c0c0" stroke-width="1.6"/>
<path d="M245 81L249 86L251 80Z" fill="#c0c0c0"/>
<rect x="248.5" y="116.5" width="14" height="11" fill="#f4f4f4" stroke="#c8c8c8" stroke-width="1"/>
<rect x="251.5" y="119.5" width="14" height="11" fill="#f4f4f4" stroke="#c8c8c8" stroke-width="1"/>
<path d="M256 126L265 134M265 126L256 134" stroke="#c4c4c4" stroke-width="1.8"/>
</svg>
<div class="t" style="left:203.60px;top:110px;font-size:15.26px;line-height:17px;color:#444;font-weight:normal;transform:scaleX(0.9487);">New</div>
<div class="t" style="left:196.60px;top:130px;font-size:15.26px;line-height:17px;color:#444;font-weight:normal;transform:scaleX(0.9339);">Slide</div>
<svg style="position:absolute;left:232.5px;top:136px;" width="7" height="4" viewBox="0 0 7 4"><path d="M0 0H7L3.5 3.5Z" fill="#666"/></svg>
<div class="t" style="left:269.60px;top:79px;font-size:14.53px;line-height:16px;color:#a6a6a6;font-weight:normal;transform:scaleX(0.9324);">Reset</div>
<div class="t" style="left:269.60px;top:117px;font-size:14.53px;line-height:16px;color:#a6a6a6;font-weight:normal;transform:scaleX(1.0186);">Delete</div>
<div style="position:absolute;left:329px;top:74px;width:167px;height:27px;background:#fff;box-sizing:border-box;border:1px solid #c6c6c6"></div>
<div style="position:absolute;left:448px;top:74px;width:1px;height:27px;background:#c6c6c6"></div>
<div class="t" style="left:332.40px;top:79px;font-size:15.70px;line-height:17px;color:#333;font-weight:normal;transform:scaleX(0.9589);">Forget Me Not</div>
<svg style="position:absolute;left:437.5px;top:85.5px;" width="7" height="4" viewBox="0 0 7 4"><path d="M0 0H7L3.5 3.5Z" fill="#666"/></svg>
<div class="t" style="left:452.40px;top:79px;font-size:15.70px;line-height:17px;color:#333;font-weight:normal;transform:scaleX(0.8708);">60</div>
<svg style="position:absolute;left:484.5px;top:85.5px;" width="7" height="4" viewBox="0 0 7 4"><path d="M0 0H7L3.5 3.5Z" fill="#666"/></svg>
<svg style="position:absolute;left:0px;top:0px;" width="600" height="172" viewBox="0 0 600 172">
<path d="M563 94L568 80L573 94M565 89H571" fill="none" stroke="#666" stroke-width="1.4"/>
<path d="M570 95L578 86L582 90L574 99Z" fill="#f0907a"/>
<path d="M570 95L574 99L572 100L568 97Z" fill="#e8e0e0"/>
<path d="M504 94L510 80L516 94M506.5 89H513.5" fill="none" stroke="#555" stroke-width="1.6"/>
<path d="M513 80L516 76.5L519 80Z" fill="#555"/>
<path d="M529 94L535 80L541 94M531.5 89H538.5" fill="none" stroke="#555" stroke-width="1.6"/>
<path d="M538 77H544L541 80.5Z" fill="#3b74b6"/>
<rect x="552.5" y="76" width="1" height="22" fill="#e0e0e0"/>
<rect x="539" y="113" width="1" height="22" fill="#e0e0e0"/>
<path d="M388.5 131.5H399.5" stroke="#444" stroke-width="1.4"/>

<path d="M463.5 130.5H479.5M466 128L463.5 130.5L466 133M477 128L479.5 130.5L477 133" fill="none" stroke="#3b74b6" stroke-width="1"/>
</svg>
<div class="t" style="left:336.00px;top:114px;font-size:17.44px;line-height:20px;color:#444;font-weight:bold;transform:scaleX(0.7941);">B</div>
<div class="t" style="left:364.19px;top:114px;font-size:17.44px;line-height:20px;color:#444;font-weight:bold;transform:scaleX(1.0717);font-style:italic;font-family:'Liberation Serif'">I</div>
<div class="t" style="left:389.00px;top:115px;font-size:16.72px;line-height:19px;color:#444;font-weight:bold;transform:scaleX(0.8286);">U</div>
<div class="t" style="left:414px;top:115px;font-size:17px;font-weight:bold;color:#555;text-shadow:1px 1px 1px #999">S</div>
<div class="t" style="left:436.00px;top:117px;font-size:11.63px;line-height:13px;color:#555;font-weight:normal;transform:scaleX(1.0670);">abc</div>
<div style="position:absolute;left:436px;top:125px;width:20px;height:1.3px;background:#555"></div>
<div class="t" style="left:463.50px;top:113px;font-size:14.53px;line-height:16px;color:#555;font-weight:normal;transform:scaleX(0.9556);">AV</div>
<svg style="position:absolute;left:485.5px;top:121.5px;" width="7" height="4" viewBox="0 0 7 4"><path d="M0 0H7L3.5 3.5Z" fill="#666"/></svg>
<div class="t" style="left:502.00px;top:114px;font-size:15.26px;line-height:17px;color:#555;font-weight:normal;transform:scaleX(0.9101);">Aa</div>
<svg style="position:absolute;left:523.5px;top:121.5px;" width="7" height="4" viewBox="0 0 7 4"><path d="M0 0H7L3.5 3.5Z" fill="#666"/></svg>
<div class="t" style="left:550.00px;top:112px;font-size:17.44px;line-height:20px;color:#444;font-weight:bold;transform:scaleX(1.0323);">A</div>
<svg style="position:absolute;left:572.5px;top:121.5px;" width="7" height="4" viewBox="0 0 7 4"><path d="M0 0H7L3.5 3.5Z" fill="#666"/></svg>
<svg style="position:absolute;left:0px;top:0px;" width="960" height="172" viewBox="0 0 960 172">
<g fill="#5b6f8a"><circle cx="597.5" cy="79.5" r="1.3"/><circle cx="597.5" cy="86.5" r="1.3"/><circle cx="597.5" cy="93.5" r="1.3"/></g>
<path d="M602 79.5H614M602 86.5H614M602 93.5H614" stroke="#555" stroke-width="1"/>
<path d="M641 79.5H653M641 86.5H653M641 93.5H653" stroke="#555" stroke-width="1"/>
<rect x="674" y="76" width="1" height="22" fill="#e0e0e0"/>
<rect x="735" y="76" width="1" height="22" fill="#e0e0e0"/>
<rect x="700" y="113" width="1" height="22" fill="#e0e0e0"/>
<g stroke="#c4c4c4" stroke-width="1"><path d="M693 82H701M691 85H701M693 88H701M691 91H701"/><path d="M711 82H727M717 85H727M719 88H727M711 91H727"/></g>
<path d="M684 86.5H692M687 83.5L684 86.5L687 89.5" fill="none" stroke="#c4c4c4" stroke-width="1.6"/>
<path d="M709 86.5H717M714 83.5L717 86.5L714 89.5" fill="none" stroke="#c4c4c4" stroke-width="1.6"/>
<path d="M747.5 80V95" stroke="#3b7fc4" stroke-width="1.8"/>
<path d="M744.5 82L747.5 78L750.5 82ZM744.5 93L747.5 97L750.5 93Z" fill="#3b7fc4"/>
<path d="M751 81.5H761M751 84.5H761M751 87.5H761M751 90.5H761M751 93.5H761" stroke="#555" stroke-width="1"/>
<rect x="618" y="111" width="26" height="27" fill="#fbd2b4"/>
<path d="M598 119.5H612M598 122.5H608M598 125.5H612M598 128.5H606" stroke="#555" stroke-width="1"/>
<path d="M623 119.5H639M626 122.5H636M623 125.5H639M626 128.5H636" stroke="#9a4a20" stroke-width="1"/>
<path d="M650 119.5H664M654 122.5H664M650 125.5H664M656 128.5H664" stroke="#555" stroke-width="1"/>
<path d="M675 117.5H691M675 120.5H691M675 123.5H691M675 126.5H691M675 129.5H691" stroke="#555" stroke-width="1"/>
<path d="M709 117.5H716M709 120.5H716M709 123.5H716M709 126.5H716M709 129.5H716M718 117.5H726M718 120.5H726M718 123.5H726M718 126.5H726M718 129.5H726" stroke="#4f7a90" stroke-width="1"/>
<g stroke="#555" stroke-width="1"><path d="M782 68V86M787 68V86"/><path d="M792 75V86M797 75V86"/></g>
<path d="M780 84L782 87L784 84M785 84L787 87L789 84M790 84L792 87L794 84M795 84L797 87L799 84" fill="none" stroke="#555" stroke-width="1"/>
<path d="M792 74L795 67L798 74M793 71.5H797" fill="none" stroke="#3b74b6" stroke-width="1.2"/>
<path d="M782 97.5H781.5V112.5H785M797 97.5H800.5V112.5H797" fill="none" stroke="#555" stroke-width="1"/>
<path d="M791 99V111M788.5 101.5L791 98.5L793.5 101.5M788.5 108.5L791 111.5L793.5 108.5" fill="none" stroke="#3b74b6" stroke-width="1.4"/>
<path d="M785 104.5H797" stroke="#aaa" stroke-width="0.8" stroke-dasharray="1 1"/>
<path d="M781 127H794L797 132H784Z" fill="#cfcfcf"/>
<rect x="788.5" y="131.5" width="12" height="9" fill="#fff" stroke="#c4c4c4" stroke-width="1"/>
<path d="M791 135H798M791 137.5H798" stroke="#ccc" stroke-width="0.8"/>
</svg>
<svg style="position:absolute;left:620.5px;top:84.5px;" width="7" height="4" viewBox="0 0 7 4"><path d="M0 0H7L3.5 3.5Z" fill="#666"/></svg>
<svg style="position:absolute;left:659.5px;top:84.5px;" width="7" height="4" viewBox="0 0 7 4"><path d="M0 0H7L3.5 3.5Z" fill="#666"/></svg>
<svg style="position:absolute;left:766.5px;top:85px;" width="7" height="4" viewBox="0 0 7 4"><path d="M0 0H7L3.5 3.5Z" fill="#666"/></svg>
<svg style="position:absolute;left:731.5px;top:121.5px;" width="7" height="4" viewBox="0 0 7 4"><path d="M0 0H7L3.5 3.5Z" fill="#666"/></svg>
<div class="t" style="left:633.5px;top:75.5px;font-size:6px;line-height:7px;color:#4a7a9a;font-weight:bold">1<br>2<br>3</div>
<div class="t" style="left:804.30px;top:69px;font-size:14.97px;line-height:17px;color:#444;font-weight:normal;transform:scaleX(1.0166);">Text Direction</div>
<svg style="position:absolute;left:900.5px;top:75.5px;" width="7" height="4" viewBox="0 0 7 4"><path d="M0 0H7L3.5 3.5Z" fill="#666"/></svg>
<div class="t" style="left:804.30px;top:97px;font-size:14.97px;line-height:17px;color:#444;font-weight:normal;transform:scaleX(1.0258);">Align Text</div>
<svg style="position:absolute;left:874.5px;top:102.5px;" width="7" height="4" viewBox="0 0 7 4"><path d="M0 0H7L3.5 3.5Z" fill="#666"/></svg>
<div class="t" style="left:804.30px;top:125px;font-size:14.97px;line-height:17px;color:#a6a6a6;font-weight:normal;transform:scaleX(0.9926);">Convert to SmartArt</div>
<svg style="position:absolute;left:939.5px;top:130.5px;" width="7" height="4" viewBox="0 0 7 4"><path d="M0 0H7L3.5 3.5Z" fill="#bbb"/></svg>
<div style="position:absolute;left:963px;top:66px;width:164px;height:75px;background:#fff;box-sizing:border-box;border:1px solid #bdbdbd"></div>
<svg style="position:absolute;left:0px;top:0px;" width="1140" height="172" viewBox="0 0 1140 172">
<path d="M1109.5 66V141" stroke="#d8d8d8" stroke-width="1"/>
<path d="M1109.5 92.5H1126.5M1109.5 115.5H1126.5" stroke="#d8d8d8" stroke-width="1"/>
<path d="M1115.5 81L1118 78.5L1120.5 81Z" fill="#ccc"/>
<path d="M1115 103.5H1121L1118 106.5Z" fill="#555"/>
<path d="M1115 125.5H1121M1115 127.5H1121L1118 130.5Z" stroke="#555" stroke-width="1" fill="#555"/>
<g fill="none" stroke="#555" stroke-width="1.1">
<path d="M967.5 70.5V87.5H984.5Z"/>
<rect x="990.5" y="71.5" width="18" height="15"/>
<path d="M998 76H1006M998 79H1006M993 82H1006M993 84.5H1006" stroke="#888" stroke-width="0.8"/>
<path d="M1015 70L1033 88"/>
<path d="M1039 70L1057 88M1057 82V88H1051"/>
<rect x="1063.5" y="72.5" width="17" height="13"/>
<ellipse cx="1096" cy="78.5" rx="8.5" ry="7"/>
<rect x="967.5" y="96.5" width="17.5" height="13.5" rx="3"/>
<path d="M999.5 95L991 111.5H1008Z"/>
<path d="M1015 96.5H1024.5V109.5H1033"/>
<path d="M1039 95.5H1048.5V108.5H1057M1054 105.5L1057 108.5L1054 111.5"/>
<path d="M1063.5 99.5H1071.5V94.5L1080 103L1071.5 111.5V106.5H1063.5Z"/>
<path d="M1091.5 94.5H1099.5V102.5H1104.5L1095.5 111.5L1086.5 102.5H1091.5Z"/>
<path d="M967.5 134.5V124.5L973 119.5H983V123.5H978V128.5H984.5V134.5Z" stroke-linejoin="round"/>
<path d="M998 118C992 124 1003 124 997 129C993 133 1000 137 1002 132C1004 128 996 130 1003 136"/>
<path d="M1015 118.5C1025 119 1033 126 1033 135"/>
<path d="M1038 134C1042 120 1047 116 1050 125C1053 134 1055 135 1058 134"/>
<path d="M1074 118.5C1069 118.5 1072 126 1068 126.5C1072 127 1069 134.5 1074 134.5"/>
<path d="M1093 118.5C1098 118.5 1095 126 1099 126.5C1095 127 1098 134.5 1093 134.5"/>
</g>
<path d="M994 78L996.5 72L999 78M995 76H998" fill="none" stroke="#3b74b6" stroke-width="1"/>
</svg>
<svg style="position:absolute;left:0px;top:0px;" width="1250" height="172" viewBox="0 0 1250 172">
<rect x="1140.5" y="68.5" width="15" height="15" fill="#fff" stroke="#777" stroke-width="1"/>
<rect x="1148" y="75" width="15" height="20" fill="#ecc173"/>
<rect x="1155" y="82" width="13" height="13" fill="#ecc173"/>
<rect x="1160.5" y="87.5" width="15" height="15" fill="#fff" stroke="#777" stroke-width="1"/>
<rect x="1196.5" y="69.5" width="33" height="33" rx="6" fill="#fff" stroke="#777" stroke-width="1.2"/>
<path d="M1231 79L1221 93L1224 96L1235 84Z" fill="#777"/>
<path d="M1221 93C1216 94 1213 98 1208 105H1218C1222 102 1224 99 1224 96Z" fill="#3b7fc4"/>
</svg>
<div class="t" style="left:1132.50px;top:110px;font-size:15.26px;line-height:17px;color:#444;font-weight:normal;transform:scaleX(0.9484);">Arrange</div>
<svg style="position:absolute;left:1155.5px;top:135.5px;" width="7" height="4" viewBox="0 0 7 4"><path d="M0 0H7L3.5 3.5Z" fill="#666"/></svg>
<div class="t" style="left:1196.00px;top:110px;font-size:15.26px;line-height:17px;color:#444;font-weight:normal;transform:scaleX(0.9478);">Quick</div>
<div class="t" style="left:1190.00px;top:130px;font-size:15.26px;line-height:17px;color:#444;font-weight:normal;transform:scaleX(0.9024);">Styles</div>
<svg style="position:absolute;left:1231.5px;top:135.5px;" width="7" height="4" viewBox="0 0 7 4"><path d="M0 0H7L3.5 3.5Z" fill="#666"/></svg>
<svg style="position:absolute;left:0px;top:0px;" width="1420" height="172" viewBox="0 0 1420 172">
<path d="M1248 76L1255 69L1262 76L1255 83Z" fill="#fff" stroke="#666" stroke-width="1"/>
<path d="M1253 67.5L1256 70" stroke="#666" stroke-width="1.2"/>
<path d="M1260 72C1263 73 1263 77 1261 79" fill="none" stroke="#3b7fc4" stroke-width="1.3"/>
<rect x="1244" y="82.5" width="20" height="3.5" fill="#e8731e"/>
<path d="M1249 105L1260 94L1263 97L1252 108L1248 109Z" fill="#3b7fc4"/>
<path d="M1244.5 105.5V92.5H1256" fill="none" stroke="#888" stroke-width="1"/>
<rect x="1244.5" y="108.5" width="19" height="3" fill="#fff" stroke="#888" stroke-width="1"/>
<path d="M1246 134L1252 124H1262L1259 136Z" fill="#d8d8d8" stroke="#777" stroke-width="1"/>
<path d="M1246 134L1259 136L1263 129" fill="none" stroke="#777" stroke-width="1.5"/>
<path d="M1388 84V76H1390V73H1392V68H1395V84Z" fill="#5a5a5a"/>
<path d="M1406 84V76H1404V73H1402V68H1399V84Z" fill="#5a5a5a"/>
<rect x="1395" y="73.5" width="4" height="3" fill="#666"/>
<path d="M1389.5 77V83M1404.5 77V83M1391.5 74V75.5M1402.5 74V75.5" stroke="#fff" stroke-width="1"/>
<path d="M1391 123V137L1394.5 133.5L1397 139L1399 138L1396.5 132.5H1401Z" fill="#fff" stroke="#555" stroke-width="1"/>
<path d="M1390 106C1391 110 1393 110 1396 110M1393.5 108L1396 110L1393.5 112" fill="none" stroke="#3b74b6" stroke-width="1.1"/>
</svg>
<div class="t" style="left:1391px;top:95px;font-size:9px;color:#555">a<span style="font-size:8px">b</span></div>
<div class="t" style="left:1396px;top:104px;font-size:9px;color:#3b74b6">ac</div>
<div class="t" style="left:1267.50px;top:68px;font-size:14.97px;line-height:17px;color:#444;font-weight:normal;transform:scaleX(0.9463);">Shape Fill</div>
<svg style="position:absolute;left:1334.5px;top:74.5px;" width="7" height="4" viewBox="0 0 7 4"><path d="M0 0H7L3.5 3.5Z" fill="#666"/></svg>
<div class="t" style="left:1267.50px;top:95px;font-size:14.97px;line-height:17px;color:#444;font-weight:normal;transform:scaleX(0.9696);">Shape Outline</div>
<svg style="position:absolute;left:1363.5px;top:101.5px;" width="7" height="4" viewBox="0 0 7 4"><path d="M0 0H7L3.5 3.5Z" fill="#666"/></svg>
<div class="t" style="left:1267.50px;top:122px;font-size:14.97px;line-height:17px;color:#444;font-weight:normal;transform:scaleX(0.9501);">Shape Effects</div>
<svg style="position:absolute;left:1359.5px;top:128.5px;" width="7" height="4" viewBox="0 0 7 4"><path d="M0 0H7L3.5 3.5Z" fill="#666"/></svg>
<div class="t" style="left:1410.00px;top:68px;font-size:14.97px;line-height:17px;color:#444;font-weight:normal;transform:scaleX(0.9444);">Find</div>
<div class="t" style="left:1410.00px;top:95px;font-size:14.97px;line-height:17px;color:#444;font-weight:normal;transform:scaleX(0.9558);">Replace</div>
<svg style="position:absolute;left:1472.5px;top:101.5px;" width="7" height="4" viewBox="0 0 7 4"><path d="M0 0H7L3.5 3.5Z" fill="#666"/></svg>
<div class="t" style="left:1410.00px;top:122px;font-size:14.97px;line-height:17px;color:#444;font-weight:normal;transform:scaleX(0.9494);">Select</div>
<svg style="position:absolute;left:1453.5px;top:128.5px;" width="7" height="4" viewBox="0 0 7 4"><path d="M0 0H7L3.5 3.5Z" fill="#666"/></svg>
<svg style="position:absolute;left:1897px;top:156px;" width="14" height="9" viewBox="0 0 14 9"><path d="M1 7.5L7 1.5L13 7.5" fill="none" stroke="#555" stroke-width="1.6"/></svg>
<div style="position:absolute;left:1900px;top:174px;width:19px;height:766px;background:#d6d6d6"></div>
<div style="position:absolute;left:1900px;top:174px;width:19px;height:19px;background:#fff;box-sizing:border-box;border:1px solid #b4b4b4"></div>
<div style="position:absolute;left:1900px;top:254px;width:19px;height:61px;background:#fff;box-sizing:border-box;border:1px solid #a8a8a8"></div>
<div style="position:absolute;left:1900px;top:921px;width:19px;height:19px;background:#fff;box-sizing:border-box;border:1px solid #b4b4b4"></div>
<svg style="position:absolute;left:1900px;top:174px;" width="19" height="19" viewBox="0 0 19 19"><path d="M5 12H14L9.5 7Z" fill="#555"/></svg>
<svg style="position:absolute;left:1900px;top:921px;" width="19" height="19" viewBox="0 0 19 19"><path d="M5 7H14L9.5 12Z" fill="#555"/></svg>
<svg style="position:absolute;left:1900px;top:944px;" width="19" height="36" viewBox="0 0 19 36"><path d="M5 9H14L9.5 4.5ZM5 14H14L9.5 9.5Z" fill="#777"/><path d="M5 26H14L9.5 30.5ZM5 31H14L9.5 35.5Z" fill="#777"/></svg>
<div class="t" style="left:7.00px;top:1011px;font-size:13.66px;line-height:15px;color:#fff;font-weight:normal;transform:scaleX(0.8502);">SLIDE MASTER</div>
<svg style="position:absolute;left:0px;top:1004px;" width="400" height="28" viewBox="0 0 400 28">
<path d="M112.5 9.5H120L121 11V23.5H112.5Z" fill="none" stroke="#f4d8c8" stroke-width="1"/>
<path d="M121 11V23.5" stroke="#f4d8c8"/>
<path d="M121 9.5H129.5V23.5H121" fill="none" stroke="#f4d8c8" stroke-width="1"/>
<path d="M121.5 17L124 20L129 12" fill="none" stroke="#fff" stroke-width="1.4"/>
</svg>
<div class="t" style="left:147.50px;top:1011px;font-size:13.66px;line-height:15px;color:#fff;font-weight:normal;transform:scaleX(0.8626);">ENGLISH (UNITED STATES)</div>
<svg style="position:absolute;left:0px;top:0px;" width="1920" height="1080" viewBox="0 0 1920 1080">
<rect x="1532.5" y="1011.5" width="13" height="13" fill="none" stroke="#f6ddd0" stroke-width="1.4"/>
<rect x="1535" y="1013.5" width="8" height="5" fill="#f6ddd0"/>
<rect x="1572.5" y="1011.5" width="6" height="5.5" fill="#f6ddd0"/>
<rect x="1580.5" y="1011.5" width="6" height="5.5" fill="#f6ddd0"/>
<rect x="1572.5" y="1019" width="6" height="5.5" fill="#f6ddd0"/>
<rect x="1580.5" y="1019" width="6" height="5.5" fill="#f6ddd0"/>
<path d="M1614 1012.5L1620.5 1014V1025L1614 1023.5ZM1627.5 1012.5L1621 1014V1025L1627.5 1023.5Z" fill="none" stroke="#f6ddd0" stroke-width="1.2"/>
<path d="M1616 1016H1619M1616 1018.5H1619M1622.5 1016H1625.5M1622.5 1018.5H1625.5" stroke="#f6ddd0" stroke-width="0.8"/>
<path d="M1654.5 1012.5H1668.5" stroke="#f6ddd0" stroke-width="1.6"/>
<rect x="1656.5" y="1014.5" width="10" height="5" fill="none" stroke="#f6ddd0" stroke-width="1.2"/>
<path d="M1661.5 1020V1025M1658.5 1025.5H1664.5" stroke="#f6ddd0" stroke-width="1.2"/>
<path d="M1688 1018H1697" stroke="#fff" stroke-width="2"/>
<path d="M1701 1018.5H1826" stroke="#f6ddd0" stroke-width="1"/>
<rect x="1755" y="1010" width="5" height="17" fill="#fff"/>
<path d="M1763.5 1014V1023" stroke="#f6ddd0" stroke-width="1"/>
<path d="M1830 1018H1842M1836 1012V1024" stroke="#fff" stroke-width="2.2"/>
<rect x="1897.5" y="1011.5" width="15" height="15" fill="none" stroke="#f6ddd0" stroke-width="1.2"/>
<path d="M1905 1012V1017M1903 1014L1905 1012L1907 1014M1905 1026V1021M1903 1024L1905 1026L1907 1024M1898 1019H1903M1900 1017L1898 1019L1900 1021M1912 1019H1907M1910 1017L1912 1019L1910 1021" fill="none" stroke="#f6ddd0" stroke-width="0.9"/>
</svg>
<div class="t" style="left:1857.00px;top:1011px;font-size:13.66px;line-height:15px;color:#fff;font-weight:normal;transform:scaleX(0.8779);">90%</div>
<svg style="position:absolute;left:0px;top:0px;overflow:hidden" width="1920" height="1080" viewBox="0 0 1920 1080">
<defs>
<filter id="bl4" x="-20%" y="-50%" width="140%" height="200%"><feGaussianBlur stdDeviation="4"/></filter>
<filter id="bl2" x="-20%" y="-50%" width="140%" height="200%"><feGaussianBlur stdDeviation="2"/></filter>
</defs>
<g>
<path d="M1345 1032H1445L1455 1080H1365Z" fill="#2f70ae" opacity="0.75" filter="url(#bl4)"/>
<path d="M1455 1034L1470 1032H1580L1640 1080H1440Z" fill="#6a84a2" opacity="0.7" filter="url(#bl2)"/>
<path d="M1480 1040L1540 1036L1560 1080H1470Z" fill="#8ea2b8" opacity="0.45" filter="url(#bl4)"/>
<path d="M1575 1032H1760L1790 1080H1630Z" fill="#46668c" opacity="0.85" filter="url(#bl4)"/>
<path d="M1420 1040L1450 1050L1440 1075" stroke="#18385a" stroke-width="5" fill="none" opacity="0.6" filter="url(#bl2)"/>
<path d="M1590 1040L1640 1080M1650 1034L1700 1080" stroke="#2a4a70" stroke-width="5" fill="none" opacity="0.6" filter="url(#bl2)"/>
<path d="M600 1045C800 1050 1000 1060 1200 1075" stroke="#3a6a98" stroke-width="3" opacity="0.45" fill="none" filter="url(#bl2)"/>
<path d="M300 1070C500 1060 700 1066 900 1080" stroke="#3a6a98" stroke-width="3" opacity="0.35" fill="none" filter="url(#bl2)"/>

</g>
</svg>
<div style="position:absolute;left:135px;top:1033px;width:69px;height:46px;background:rgba(220,235,250,0.14);box-sizing:border-box;border:1px solid rgba(255,255,255,0.3)"></div>
<div style="position:absolute;left:281px;top:1033px;width:68.5px;height:46px;background:rgba(220,235,250,0.14);box-sizing:border-box;border:1px solid rgba(255,255,255,0.3)"></div>
<div style="position:absolute;left:354px;top:1033px;width:64px;height:46px;background:rgba(220,235,250,0.32);box-sizing:border-box;border:1px solid rgba(255,255,255,0.3)"></div>
<div style="position:absolute;left:427px;top:1033px;width:69px;height:46px;background:rgba(220,235,250,0.14);box-sizing:border-box;border:1px solid rgba(255,255,255,0.3)"></div>
<div style="position:absolute;left:500px;top:1033px;width:69px;height:46px;background:rgba(220,235,250,0.14);box-sizing:border-box;border:1px solid rgba(255,255,255,0.3)"></div>
<div style="position:absolute;left:419.5px;top:1033px;width:3px;height:46px;background:rgba(255,255,255,0.3)"></div>
<svg style="position:absolute;left:0px;top:0px;" width="1920" height="1080" viewBox="0 0 1920 1080">
<path d="M14 1041.5L28.5 1039.5V1054H14Z" fill="#fff"/>
<path d="M30 1039.3L46 1037V1054H30Z" fill="#fff"/>
<path d="M14 1055.5H28.5V1070L14 1068Z" fill="#fff"/>
<path d="M30 1055.5H46V1072.5L30 1070.2Z" fill="#fff"/>
<path d="M86 1056.5H108A11.5 11.5 0 1 0 105 1064.5" fill="none" stroke="#3aa8e8" stroke-width="6"/><ellipse cx="95" cy="1055" rx="21" ry="9" fill="none" stroke="#f0c030" stroke-width="3" transform="rotate(-42 95 1055)"/>
<path d="M151 1043H165L168 1040H186V1073H151Z" fill="#f3d36f"/>
<path d="M151 1048H187V1073H151Z" fill="#f7dc84"/>
<path d="M155 1060H183V1073H155Z" fill="#4aa8e0"/>
<rect x="163" y="1065" width="12" height="4" fill="#f0c860"/>
<ellipse cx="238" cy="1049" rx="14" ry="12" fill="#eae6e0" stroke="#b06a40" stroke-width="1.5"/>
<ellipse cx="236" cy="1062" rx="13" ry="7" fill="#8aa0b0"/>
<path d="M232 1040L250 1068M244 1040L240 1068" stroke="#555" stroke-width="2"/>
<circle cx="250" cy="1068" r="4" fill="none" stroke="#3b74b6" stroke-width="1.8"/>
<path d="M297 1043L318 1037V1074L297 1068Z" fill="#0a6ac8"/>
<path d="M302.5 1047V1063H310" fill="none" stroke="#fff" stroke-width="3.2"/>
<path d="M330.5 1056A6 6 0 1 1 323 1050.5" fill="none" stroke="#fff" stroke-width="3"/>
<path d="M321 1047L326 1050L321 1054Z" fill="#fff"/>
<path d="M319.5 1057A6 6 0 0 0 330 1059" fill="none" stroke="#3a8ad8" stroke-width="3"/>
<rect x="322" y="1063.5" width="13" height="12.5" fill="#4ac040"/>
<path d="M367.5 1039.5L388.5 1036V1074L367.5 1070.5Z" fill="#d24726"/>
<rect x="385.5" y="1043.5" width="18" height="25.5" fill="#fff" stroke="#d24726" stroke-width="1.6"/>
<path d="M372.5 1064V1048H378A4.5 4.5 0 0 1 378 1057H372.5" fill="none" stroke="#fff" stroke-width="3"/>
<path d="M390 1049A4 4 0 1 0 394 1053H390Z" fill="#d24726"/>
<path d="M389 1058H399M389 1062H399" stroke="#d24726" stroke-width="1.8"/>
<g transform="rotate(-30 461 1056)">
<rect x="446" y="1042" width="30" height="28" rx="2" fill="#e6e6e6" stroke="#777" stroke-width="1"/>
<rect x="449" y="1045" width="24" height="22" fill="#1e221a"/>
<rect x="457" y="1045" width="8" height="22" fill="#7a8a50"/>
<path d="M458 1052L463 1056L458 1060" fill="none" stroke="#d8e8a0" stroke-width="1.4"/>
</g>
<g transform="rotate(-30 531 1056)">
<rect x="516" y="1042" width="30" height="28" rx="2" fill="#e6e6e6" stroke="#777" stroke-width="1"/>
<rect x="519" y="1045" width="24" height="22" fill="#1e221a"/>
<rect x="527" y="1045" width="8" height="22" fill="#7a8a50"/>
<path d="M528 1052L533 1056L528 1060" fill="none" stroke="#d8e8a0" stroke-width="1.4"/>
</g>
<circle cx="543" cy="1064" r="7" fill="#e0501c" stroke="#f8d0c0" stroke-width="1"/>
<rect x="538" y="1063" width="10" height="2.4" fill="#f8b090"/>
<path d="M1672.5 1060L1677.5 1055L1682.5 1060Z" fill="#fff"/>
<circle cx="1710" cy="1056.5" r="9.5" fill="#e8641e"/>
<path d="M1710 1052V1064M1705 1056C1706 1053 1714 1053 1715 1056" fill="none" stroke="#fff" stroke-width="2"/>
<path d="M1738 1049V1053M1741 1049V1053M1737 1053H1742V1056L1739.5 1058L1737 1056ZM1739.5 1058V1067" fill="none" stroke="#fff" stroke-width="1.3"/>
<rect x="1745.5" y="1050.5" width="10" height="16" rx="1.5" fill="none" stroke="#fff" stroke-width="1.4"/>
<rect x="1748" y="1053" width="5" height="11" fill="#fff"/>
<rect x="1767.5" y="1052.5" width="17" height="10" fill="none" stroke="#fff" stroke-width="1.4"/>
<path d="M1776 1063V1066M1771 1066.5H1781" stroke="#fff" stroke-width="1.4"/>
<circle cx="1768" cy="1049" r="2.5" fill="none" stroke="#fff" stroke-width="1.2"/>
<path d="M1768 1051.5V1058" stroke="#fff" stroke-width="1.2"/>
<path d="M1797 1055H1801L1806 1050V1066L1801 1061H1797Z" fill="#fff"/>
<path d="M1809 1054A5 5 0 0 1 1809 1062M1812 1051A9 9 0 0 1 1812 1065" fill="none" stroke="#fff" stroke-width="1.2"/>
</svg>
<div class="t" style="left:1631.00px;top:1046px;font-size:14.83px;line-height:16px;color:#fff;font-weight:normal;transform:scaleX(0.9372);">EN</div>
<div class="t" style="left:1839.00px;top:1037px;font-size:16.72px;line-height:19px;color:#fff;font-weight:normal;transform:scaleX(0.9365);">12:30 PM</div>
<div class="t" style="left:1831.00px;top:1058px;font-size:16.72px;line-height:19px;color:#fff;font-weight:normal;transform:scaleX(0.8845);">12/12/2013</div>
</body></html>
